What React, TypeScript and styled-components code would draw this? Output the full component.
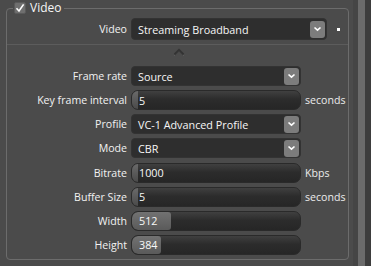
import React from 'react';
import styled, { createGlobalStyle } from 'styled-components';

type Field =
  | { kind: 'combo'; label: string; value: string }
  | { kind: 'text'; label: string; value: string; suffix?: string }
  | { kind: 'slider'; label: string; value: number };

const fields: Field[] = [
  { kind: 'combo', label: 'Frame rate', value: 'Source' },
  { kind: 'text', label: 'Key frame interval', value: '5', suffix: 'seconds' },
  { kind: 'combo', label: 'Profile', value: 'VC-1 Advanced Profile' },
  { kind: 'combo', label: 'Mode', value: 'CBR' },
  { kind: 'text', label: 'Bitrate', value: '1000', suffix: 'Kbps' },
  { kind: 'text', label: 'Buffer Size', value: '5', suffix: 'seconds' },
  { kind: 'slider', label: 'Width', value: 512 },
  { kind: 'slider', label: 'Height', value: 384 },
];

const SLIDER_MAX = 2200;

function DropButton() {
  return (
    <DropBtn>
      <svg width="9" height="6" viewBox="0 0 9 6">
        <path d="M1.5 1.5 L4.5 4.2 L7.5 1.5" fill="none" stroke="#ffffff" strokeWidth="1.6" />
      </svg>
    </DropBtn>
  );
}

export default function App() {
  return (
    <>
      <GlobalStyle />
      <Page>
        <Panel>
          <Group>
            <Legend>
              <Check>
                <svg width="10" height="10" viewBox="0 0 10 10">
                  <path d="M1.5 5.2 L4 8 L8.6 1.4" fill="none" stroke="#ffffff" strokeWidth="1.6" />
                </svg>
              </Check>
              Video
            </Legend>
            <TopRow>
              <Label>Video</Label>
              <Combo $wide>
                <span>Streaming Broadband</span>
                <DropButton />
              </Combo>
              <Dot />
            </TopRow>
            <Divider />
            <Collapse>
              <svg width="12" height="8" viewBox="0 0 12 8">
                <path d="M1.5 6.5 L6 2 L10.5 6.5" fill="none" stroke="#6a6a6a" strokeWidth="1" transform="translate(0 1)" />
                <path d="M1.5 6.5 L6 2 L10.5 6.5" fill="none" stroke="#333333" strokeWidth="2" />
              </svg>
            </Collapse>
            <Grid>
              {fields.map((f) => (
                <React.Fragment key={f.label}>
                  <Label>{f.label}</Label>
                  {f.kind === 'combo' && (
                    <Combo>
                      <span>{f.value}</span>
                      <DropButton />
                    </Combo>
                  )}
                  {f.kind === 'text' && (
                    <TextBox>
                      <Cap />
                      <Value>{f.value}</Value>
                    </TextBox>
                  )}
                  {f.kind === 'slider' && (
                    <TextBox>
                      <Fill style={{ width: `${(f.value / SLIDER_MAX) * 100}%` }} />
                      <Value>{f.value}</Value>
                    </TextBox>
                  )}
                  <Suffix>{f.kind === 'text' ? f.suffix : ''}</Suffix>
                </React.Fragment>
              ))}
            </Grid>
          </Group>
        </Panel>
        <Scroll />
        <Rest />
      </Page>
    </>
  );
}

const GlobalStyle = createGlobalStyle`
  html, body {
    margin: 0;
    padding: 0;
    background: #3e3e3e;
  }
  body {
    font-family: "Open Sans", "Liberation Sans", sans-serif;
    font-size: 11px;
    color: #f0f0f0;
  }
`;

const Page = styled.div`
  display: flex;
  width: 371px;
  height: 266px;
  overflow: hidden;
`;

const Panel = styled.div`
  width: 358px;
  background: #4b4b4b;
  padding: 0 4px 0 6px;
  box-sizing: border-box;
  border-right: 5px solid #454545;
`;

const Scroll = styled.div`
  width: 7px;
  background: #6b6b6b;
`;

const Rest = styled.div`
  flex: 1;
  background: #3d3d3d;
`;

const Group = styled.fieldset`
  margin: 0;
  padding: 2px 0 3px 0;
  border: 1px solid #6c6c6c;
  border-radius: 4px;
  width: 343px;
  box-sizing: border-box;
  height: 260px;
`;

const Legend = styled.legend`
  display: flex;
  align-items: center;
  gap: 4px;
  margin-left: 6px;
  padding: 0 3px 0 1px;
  height: 16px;
  line-height: 16px;
  font-size: 12px;
  color: #f6f6f6;
`;

const Check = styled.span`
  width: 12px;
  height: 12px;
  background: #6f6f6f;
  border: 1px solid #5a5a5a;
  border-radius: 2px;
  box-sizing: border-box;
  display: flex;
  align-items: center;
  justify-content: center;
`;

const TopRow = styled.div`
  display: grid;
  grid-template-columns: 120px 196px auto;
  column-gap: 4px;
  align-items: center;
  height: 22px;
`;

const Label = styled.div`
  text-align: right;
  font-size: 10.6px;
  color: #f2f2f2;
  white-space: nowrap;
`;

const Combo = styled.div<{ $wide?: boolean }>`
  height: ${(p) => (p.$wide ? 22 : 20)}px;
  background: #2e2e2e;
  border: 1px solid #333333;
  border-radius: 4px;
  box-sizing: border-box;
  display: flex;
  align-items: center;
  justify-content: space-between;
  padding: 0 1px 0 6px;
  color: #f6f6f6;
  font-size: 10.8px;
`;

const DropBtn = styled.div`
  width: 15px;
  height: 17px;
  background: #7c7c7c;
  border-radius: 3px;
  display: flex;
  align-items: center;
  justify-content: center;
`;

const Dot = styled.div`
  width: 3px;
  height: 3px;
  background: #ffffff;
  margin-left: 6px;
`;

const Divider = styled.div`
  height: 0;
  border-top: 1px solid #5c5c5c;
  margin-top: 4px;
`;

const Collapse = styled.div`
  height: 21px;
  display: flex;
  justify-content: center;
  align-items: flex-start;
  padding-top: 3px;
  box-sizing: border-box;
  padding-left: 2px;
`;

const Grid = styled.div`
  display: grid;
  grid-template-columns: 120px 170px auto;
  grid-auto-rows: 20px;
  column-gap: 4px;
  row-gap: 4.15px;
  align-items: center;
`;

const TextBox = styled.div`
  position: relative;
  height: 20px;
  border-radius: 7px;
  background: linear-gradient(#404040, #2c2c2c 45%, #262626);
  border: 1px solid #2a2a2a;
  box-sizing: border-box;
  overflow: hidden;
  display: flex;
  align-items: center;
`;

const Cap = styled.div`
  position: absolute;
  left: 0;
  top: 0;
  bottom: 0;
  width: 6px;
  background: linear-gradient(#6a6a6a, #4a4a4a);
`;

const Fill = styled.div`
  position: absolute;
  left: 0;
  top: 0;
  bottom: 0;
  background: linear-gradient(#727272, #5a5a5a);
  border-radius: 6px 3px 3px 6px;
`;

const Value = styled.span`
  position: relative;
  padding-left: 7px;
  color: #f8f8f8;
  font-size: 10.8px;
`;

const Suffix = styled.div`
  color: #ececec;
  font-size: 10.6px;
  white-space: nowrap;
`;
